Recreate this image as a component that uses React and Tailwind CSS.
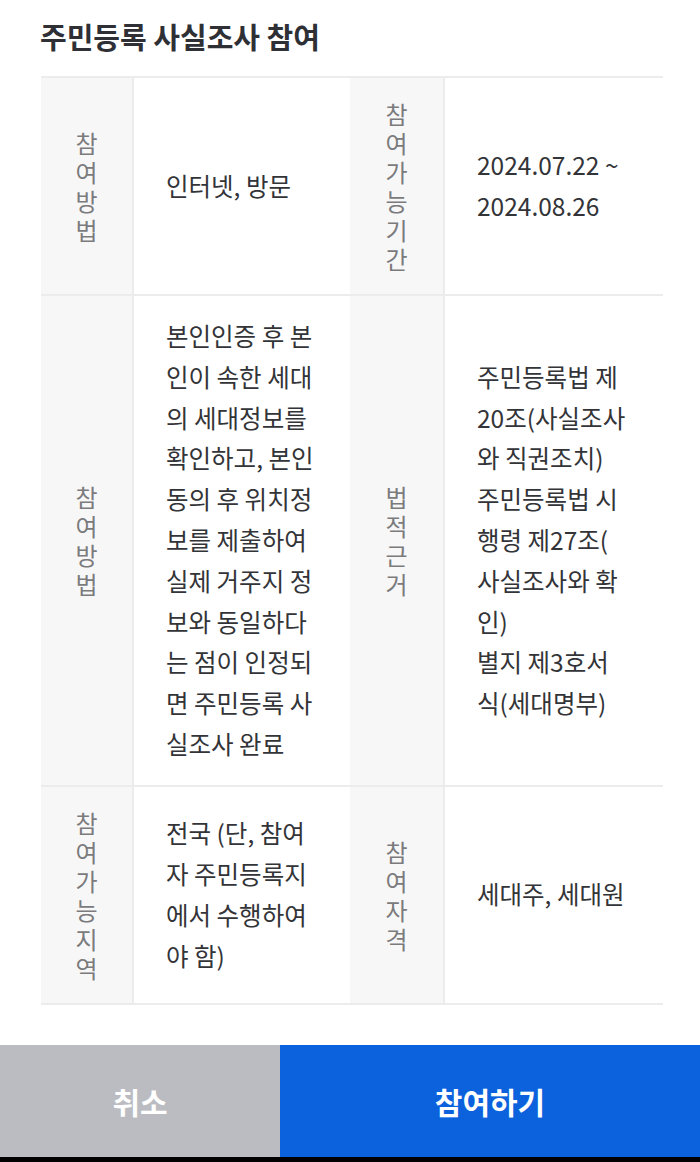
const rows = [
  {
    left: { label: "참여방법", lines: ["인터넷, 방문"] },
    right: { label: "참여가능기간", lines: ["2024.07.22 ~", "2024.08.26"] },
  },
  {
    left: {
      label: "참여방법",
      lines: [
        "본인인증 후 본",
        "인이 속한 세대",
        "의 세대정보를",
        "확인하고, 본인",
        "동의 후 위치정",
        "보를 제출하여",
        "실제 거주지 정",
        "보와 동일하다",
        "는 점이 인정되",
        "면 주민등록 사",
        "실조사 완료",
      ],
    },
    right: {
      label: "법적근거",
      lines: [
        "주민등록법 제",
        "20조(사실조사",
        "와 직권조치)",
        "주민등록법 시",
        "행령 제27조(",
        "사실조사와 확",
        "인)",
        "별지 제3호서",
        "식(세대명부)",
      ],
    },
  },
  {
    left: {
      label: "참여가능지역",
      lines: ["전국 (단, 참여", "자 주민등록지", "에서 수행하여", "야 함)"],
    },
    right: { label: "참여자격", lines: ["세대주, 세대원"] },
  },
];

function HeadCell({ label, className }) {
  return (
    <div
      className={`flex items-center justify-center border-r-2 border-[#ececec] bg-[#f7f7f8] py-[21px] ${className}`}
    >
      <p className="w-[26px] break-all text-center text-[24px] leading-[29px] text-[#7b7b7d]">
        {label}
      </p>
    </div>
  );
}

function ValueCell({ lines, className }) {
  return (
    <div
      className={`flex flex-col justify-center py-5 pl-8 text-[24.5px] leading-[40.8px] text-[#333438] ${className}`}
    >
      {lines.map((line, i) => (
        <span key={i} className="whitespace-nowrap">
          {line}
        </span>
      ))}
    </div>
  );
}

export default function App() {
  return (
    <div className="flex h-[1162px] w-[700px] flex-col bg-white font-['Noto_Sans_CJK_KR','Noto_Sans',sans-serif]">
      <h1 className="pl-10 pt-4 text-[29px] font-bold leading-[40px] text-[#2e3035]">
        주민등록 사실조사 참여
      </h1>

      <div className="ml-[41px] mt-5 w-[622px] border-t-2 border-[#ececec]">
        {rows.map((row, i) => (
          <div key={i} className="flex border-b-2 border-[#ececec]">
            <HeadCell label={row.left.label} className="w-[93px]" />
            <ValueCell lines={row.left.lines} className="w-[216px]" />
            <HeadCell label={row.right.label} className="w-[95px]" />
            <ValueCell lines={row.right.lines} className="flex-1" />
          </div>
        ))}
      </div>

      <div className="mt-auto flex h-[112px]">
        <button className="flex w-[280px] items-center justify-center bg-[#babcc1] text-[30px] font-bold text-white">
          취소
        </button>
        <button className="flex flex-1 items-center justify-center bg-[#0c62dc] text-[30px] font-bold text-white">
          참여하기
        </button>
      </div>
      <div className="h-[5px] bg-black" />
    </div>
  );
}
